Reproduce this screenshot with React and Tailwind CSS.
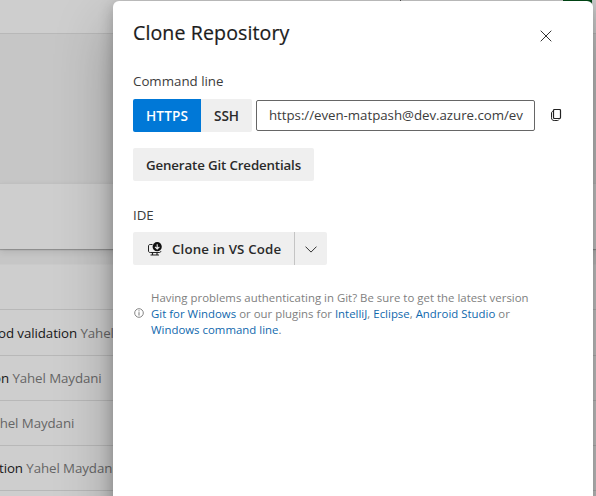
const commits = [
  { title: "od validation", author: "Yahel Maydani", height: "h-[46px]", shift: "-ml-[2px]", pad: "pt-[2px]" },
  { title: "on", author: "Yahel Maydani", height: "h-[45px]", shift: "-ml-[7px]", pad: "pt-[2px]" },
  { title: "", author: "Yahel Maydani", height: "h-[45px]", shift: "-ml-[15px]", pad: "pt-[2px]" },
  { title: "tion", author: "Yahel Maydani", height: "h-[45px]", shift: "-ml-[1px]", pad: "pt-[2px]" },
];

function Backdrop() {
  return (
    <div className="flex h-[496px] flex-col bg-[#c6c6c6]">
      <div className="flex h-[34px] shrink-0 border-b border-[#b8b8b8] bg-[#cecece]">
        <div className="ml-[400px] h-1 w-px bg-[#555]" />
        <div className="ml-[162px] h-1 w-[29px] bg-[#004a16]" />
      </div>
      <div className="h-[149px] shrink-0" />
      <div className="h-[66px] shrink-0 border-t border-[#c0c0c0] bg-[#cecece] shadow-[0_1px_1px_rgba(0,0,0,0.22),0_3px_7px_rgba(0,0,0,0.1)]" />
      <div className="mt-[15px] h-[46px] shrink-0 border-y border-t-[#cacaca] border-b-[#b8b8b8] bg-[#cecece]" />
      {commits.map((c, i) => (
        <div
          key={i}
          className={`flex shrink-0 items-center overflow-hidden border-b border-[#b8b8b8] bg-[#cecece] ${c.height} ${c.pad}`}
        >
          <p className={`whitespace-pre text-[13.3px] tracking-[-0.08px] text-[#666] ${c.shift}`}>
            {c.title && <span className="text-[#181818]">{c.title} </span>}
            {c.author}
          </p>
        </div>
      ))}
      <div className="flex-1 bg-[#cecece]" />
    </div>
  );
}

function CloseIcon() {
  return (
    <svg width="12" height="12" viewBox="0 0 12 12" fill="none" stroke="#333" strokeWidth="1">
      <path d="M.7.7l10.6 10.6M11.3.7L.7 11.3" />
    </svg>
  );
}

function CopyIcon() {
  return (
    <svg width="11" height="13" viewBox="0 0 11 13" fill="none" stroke="#222" strokeWidth="1">
      <rect x="2.5" y=".5" width="7" height="9" rx="1" strokeWidth="1.2" />
      <path d="M2.2 2.2C1.2 2.4.5 3 .5 4v4.8c0 1.8 1 2.7 2.7 2.7h3.2c.8 0 1.3-.3 1.6-.9" />
    </svg>
  );
}

function CloneIcon() {
  return (
    <svg width="14" height="14" viewBox="0 0 14 14" fill="none">
      <path d="M4.5 2.5H2.2C1.2 2.5.5 3 .5 4v5c0 1 .7 1.5 1.7 1.5h9.1c1 0 1.5-.5 1.5-1.5" stroke="#222" />
      <path d="M4.5 10.5v2.5M9 10.5v2.5M2.5 13h8.5" stroke="#222" strokeWidth="1.2" />
      <circle cx="9.2" cy="4.7" r="4.6" fill="#111" />
      <path d="M9.2 2.2v4.6M7 4.8L9.2 7l2.2-2.2" stroke="#efefef" strokeWidth="1.1" />
    </svg>
  );
}

function InfoIcon() {
  return (
    <svg width="10" height="10" viewBox="0 0 10 10" fill="none" stroke="#777">
      <circle cx="5" cy="5" r="4.3" strokeWidth=".9" />
      <path d="M5 4.2v3.4M5 2.3v1.1" strokeWidth="1" />
    </svg>
  );
}

function Link({ children }) {
  return <a className="text-[#0f68ad]">{children}</a>;
}

function CloneDialog() {
  return (
    <section className="absolute top-px left-[113px] flex h-[620px] w-[480px] flex-col rounded-md bg-white pl-5 text-[#2a2a2a] shadow-[0_25.6px_57.6px_rgba(0,0,0,0.28),0_4.8px_14.4px_rgba(0,0,0,0.24)]">
      <header className="flex h-[68px] justify-between pr-[41px]">
        <h1 className="mt-[18px] text-[19.6px] leading-7 font-medium tracking-[0.1px] whitespace-nowrap text-[#1c1c1c] [-webkit-text-stroke:0.2px]">
          Clone Repository
        </h1>
        <button className="mt-[29px] h-3 w-3"><CloseIcon /></button>
      </header>
      <div className="mt-0.5 h-5 text-[13.3px] leading-5 text-[#3c3c3c]">Command line</div>
      <div className="mt-2 flex h-[33px] items-center">
        <button className="h-[33px] w-[68px] rounded-l-xs bg-[#0078d7] pt-px text-[13.6px] font-semibold tracking-[0.1px] text-white">HTTPS</button>
        <button className="h-[33px] w-[51px] rounded-r-xs bg-[#efefef] pt-px text-[13.6px] font-semibold">SSH</button>
        <div className="ml-1 flex h-[31px] w-[279px] items-center overflow-hidden rounded-xs border border-[#666] pt-px pl-3 text-[13.3px] tracking-[-0.04px] whitespace-nowrap text-[#3c3c3c]">
          https://even-matpash@dev.azure.com/ev
        </div>
        <button className="ml-4 h-[13px] w-[11px]"><CopyIcon /></button>
      </div>
      <button className="mt-4 h-[33px] w-[181px] rounded-xs bg-[#efefef] pt-0.5 text-[13.3px] font-semibold tracking-[-0.14px] whitespace-nowrap">
        Generate Git Credentials
      </button>
      <div className="mt-6 h-5 text-[13.3px] leading-5 text-[#3c3c3c]">IDE</div>
      <div className="mt-[7px] flex h-[33px] overflow-hidden">
        <button className="flex w-[161px] items-center rounded-l-xs bg-[#efefef] pl-[15px] text-[13.3px] font-semibold whitespace-nowrap">
          <CloneIcon />
          <span className="ml-2.5 pt-0.5 tracking-[0.14px]">Clone in VS Code</span>
        </button>
        <button className="flex w-[33px] items-center justify-center rounded-r-xs border-l border-[#c4c4c4] bg-[#efefef]">
          <svg className="mt-0.5" width="12" height="7" viewBox="0 0 12 7" fill="none" stroke="#333">
            <path d="M.5.6L6 6.1 11.5.6" />
          </svg>
        </button>
      </div>
      <div className="mt-[25px] flex items-center">
        <span className="ml-px w-[17px] pb-0.5"><InfoIcon /></span>
        <p className="text-[11.4px] leading-4 tracking-[0.015px] whitespace-nowrap text-[#808080]">
          Having problems authenticating in Git? Be sure to get the latest version
          <br />
          <Link>Git for Windows</Link> or our plugins for <Link>IntelliJ</Link>, <Link>Eclipse</Link>, <Link>Android Studio</Link> or
          <br />
          <Link>Windows command line</Link>.
        </p>
      </div>
    </section>
  );
}

export default function App() {
  return (
    <main className="relative h-[496px] w-[596px] overflow-hidden font-['Open_Sans','Noto_Sans',sans-serif]">
      <Backdrop />
      <CloneDialog />
    </main>
  );
}
